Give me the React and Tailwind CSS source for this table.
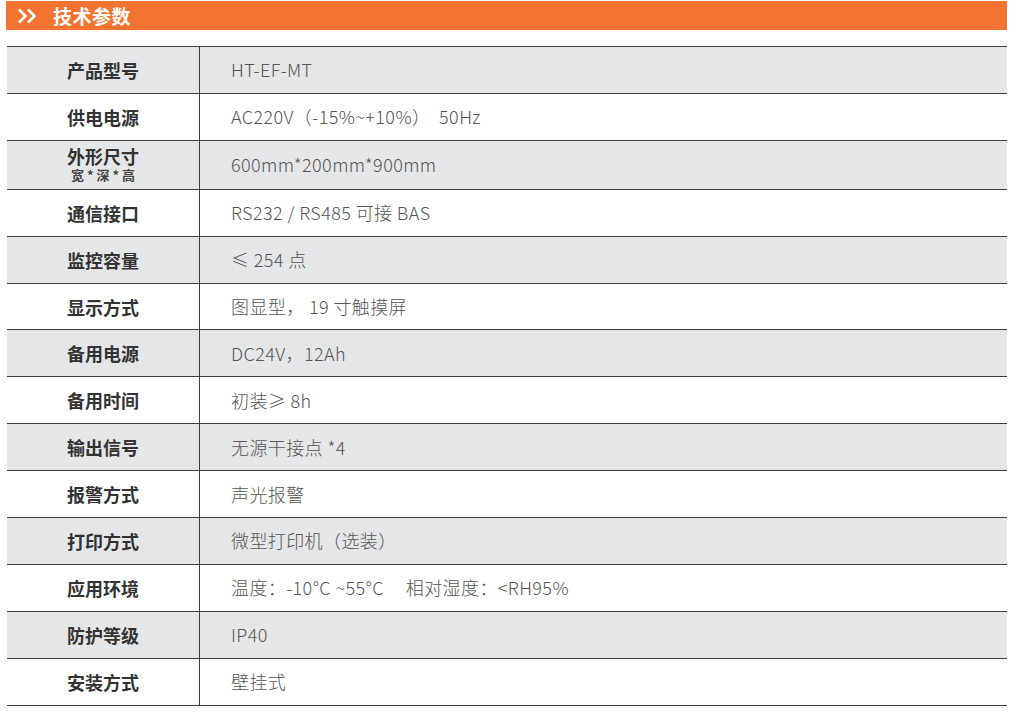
import React from "react";

const rows = [
  ["产品型号", "HT-EF-MT"],
  ["供电电源", "AC220V（-15%~+10%）  50Hz"],
  ["外形尺寸", "600mm*200mm*900mm", "宽 * 深 * 高"],
  ["通信接口", "RS232 / RS485 可接 BAS"],
  ["监控容量", "≤ 254 点"],
  ["显示方式", "图显型， 19 寸触摸屏"],
  ["备用电源", "DC24V，12Ah"],
  ["备用时间", "初装≥ 8h"],
  ["输出信号", "无源干接点 *4"],
  ["报警方式", "声光报警"],
  ["打印方式", "微型打印机（选装）"],
  ["应用环境", "温度：-10°C ~55°C     相对湿度：<RH95%"],
  ["防护等级", "IP40"],
  ["安装方式", "壁挂式"],
];

export default function App() {
  return (
    <div
      className="w-[1017px] h-[715px] bg-white pt-[1px] pl-[6px] pr-[10px]"
      style={{ fontFamily: '"Noto Sans CJK SC", "Noto Sans", sans-serif' }}
    >
      <div className="h-[29px] bg-[#f37331] flex items-center pl-[11px]">
        <svg width="22" height="16" viewBox="0 0 22 16" className="mr-[14px]">
          <path d="M2 1.5 L8.5 8 L2 14.5" fill="none" stroke="#fff" strokeWidth="2.6" strokeLinejoin="miter" />
          <path d="M11 1.5 L17.5 8 L11 14.5" fill="none" stroke="#fff" strokeWidth="2.6" strokeLinejoin="miter" />
        </svg>
        <span className="text-white font-bold text-[19px] leading-none tracking-[0.5px]">技术参数</span>
      </div>
      <div className="mt-[16px] ml-[1px] border-t border-[#3d3d3d]">
        {rows.map(([label, value, sub], i) => (
          <div
            key={label}
            className={`flex border-b border-[#3d3d3d] ${sub ? "h-[49px]" : "h-[46.9px]"} ${i % 2 === 0 ? "bg-[#e5e6e8]" : "bg-white"}`}
          >
            <div className="w-[193px] shrink-0 border-r border-[#3d3d3d] flex flex-col items-center justify-center text-[#333]">
              <span className="font-bold text-[18px] leading-[20px]">{label}</span>
              {sub && <span className="font-bold text-[13px] leading-[16px] mt-[1px] text-[#444] whitespace-pre">{sub}</span>}
            </div>
            <div className="flex items-center pl-[31px] text-[18px] tracking-[0.4px] font-light text-[#555] whitespace-pre">
              {value}
            </div>
          </div>
        ))}
      </div>
    </div>
  );
}
